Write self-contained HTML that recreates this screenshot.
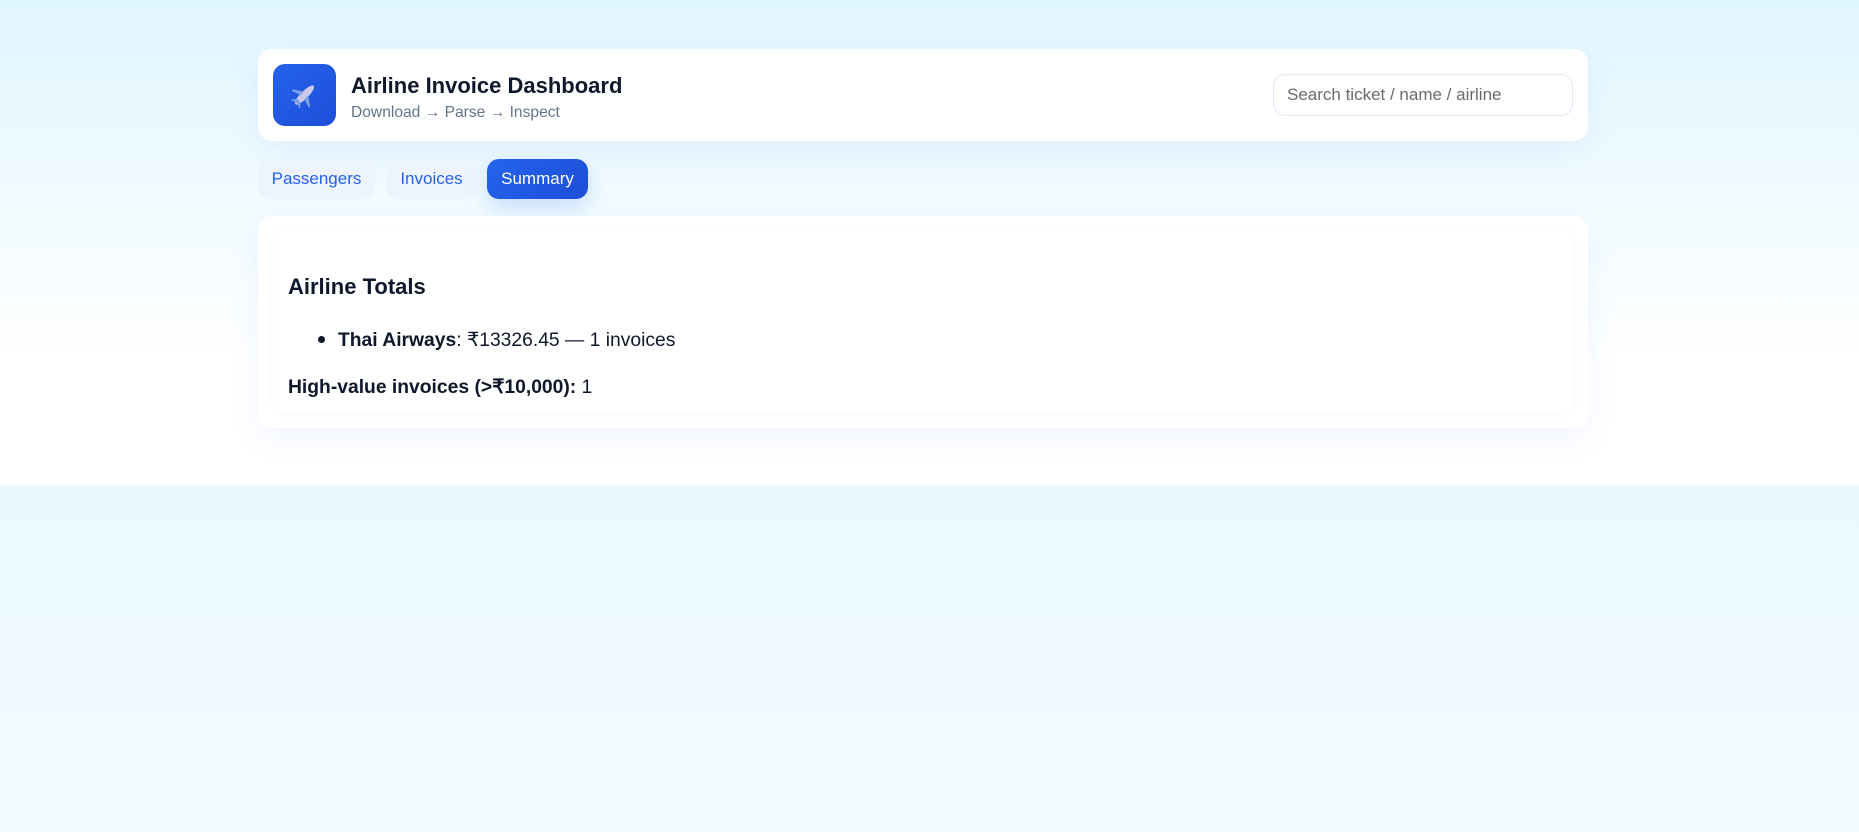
<!DOCTYPE html>
<html><head><meta charset="utf-8"><style>
html,body{margin:0;padding:0;width:1859px;height:832px;overflow:hidden}
html{background:linear-gradient(#e0f6ff,#f2fbff)}
body{font-family:"Liberation Sans",sans-serif;position:relative}
.top{position:absolute;left:0;top:0;width:1859px;height:485px;background:linear-gradient(#e0f6ff,#fff 75%)}
.card{position:absolute;background:#fff;border-radius:14px;box-shadow:0 10px 30px rgba(59,130,246,0.08)}
.icon{position:absolute;left:273px;top:64px;width:63px;height:62px;border-radius:12px;background:linear-gradient(135deg,#2563eb,#1d4ed8)}
.t1{position:absolute;left:351px;top:73px;font-size:22px;font-weight:bold;color:#0f172a}
.t2{position:absolute;left:351px;top:104px;font-size:15.6px;color:#64748b}
.search{position:absolute;left:1273px;top:74px;border:1px solid #e2ebfb;border-radius:12px;box-sizing:border-box;width:300px;height:42px;font-size:17px;color:#6b6b6b;padding:10px 13px}
.tab{position:absolute;top:159px;height:40px;border-radius:12px;font-size:17px;line-height:40px;text-align:center;color:#2563eb;background:#eef4fe}
.inner{position:absolute;left:273px;top:231px;width:1300px;height:182px;border-radius:10px;background:#fff;box-shadow:0 0 8px rgba(59,130,246,0.06)}
.h{position:absolute;left:288px;top:274px;font-size:22px;font-weight:bold;color:#0f172a}
.li{position:absolute;left:338px;top:328px;font-size:19.3px;color:#0f172a}
.dot{position:absolute;left:318px;top:336px;width:7px;height:7px;border-radius:50%;background:#0f172a}
.hv{position:absolute;left:288px;top:375px;font-size:19.3px;color:#0f172a}
</style></head><body>
<div class="top"></div>
<div class="card" style="left:258px;top:49px;width:1330px;height:92px"></div>
<div class="icon"><svg width="63" height="62" viewBox="0 0 63 62"><g transform="translate(31.5,31) rotate(45)"><ellipse cx="0" cy="0" rx="3.8" ry="13" fill="#c9c8ea"/><path d="M-3 -2 L-12 4 L-12 6 L-3 3 Z M3 -2 L12 4 L12 6 L3 3 Z" fill="#7aa2e0"/><path d="M-2 8 L-6 12 L-6 13 L0 11 L6 13 L6 12 L2 8Z" fill="#7aa2e0"/></g></svg></div>
<div class="t1">Airline Invoice Dashboard</div>
<div class="t2">Download → Parse → Inspect</div>
<div class="search">Search ticket / name / airline</div>
<div class="tab" style="left:258px;width:117px">Passengers</div>
<div class="tab" style="left:386px;width:91px">Invoices</div>
<div class="tab" style="left:487px;width:101px;color:#fff;background:linear-gradient(135deg,#2563eb,#1d4ed8);box-shadow:0 8px 20px rgba(37,99,235,0.2)">Summary</div>
<div class="card" style="left:258px;top:216px;width:1330px;height:212px"></div>
<div class="inner"></div>
<div class="h">Airline Totals</div>
<div class="dot"></div>
<div class="li"><b>Thai Airways</b>: ₹13326.45 — 1 invoices</div>
<div class="hv"><b>High-value invoices (&gt;₹10,000):</b> 1</div>
</body></html>
